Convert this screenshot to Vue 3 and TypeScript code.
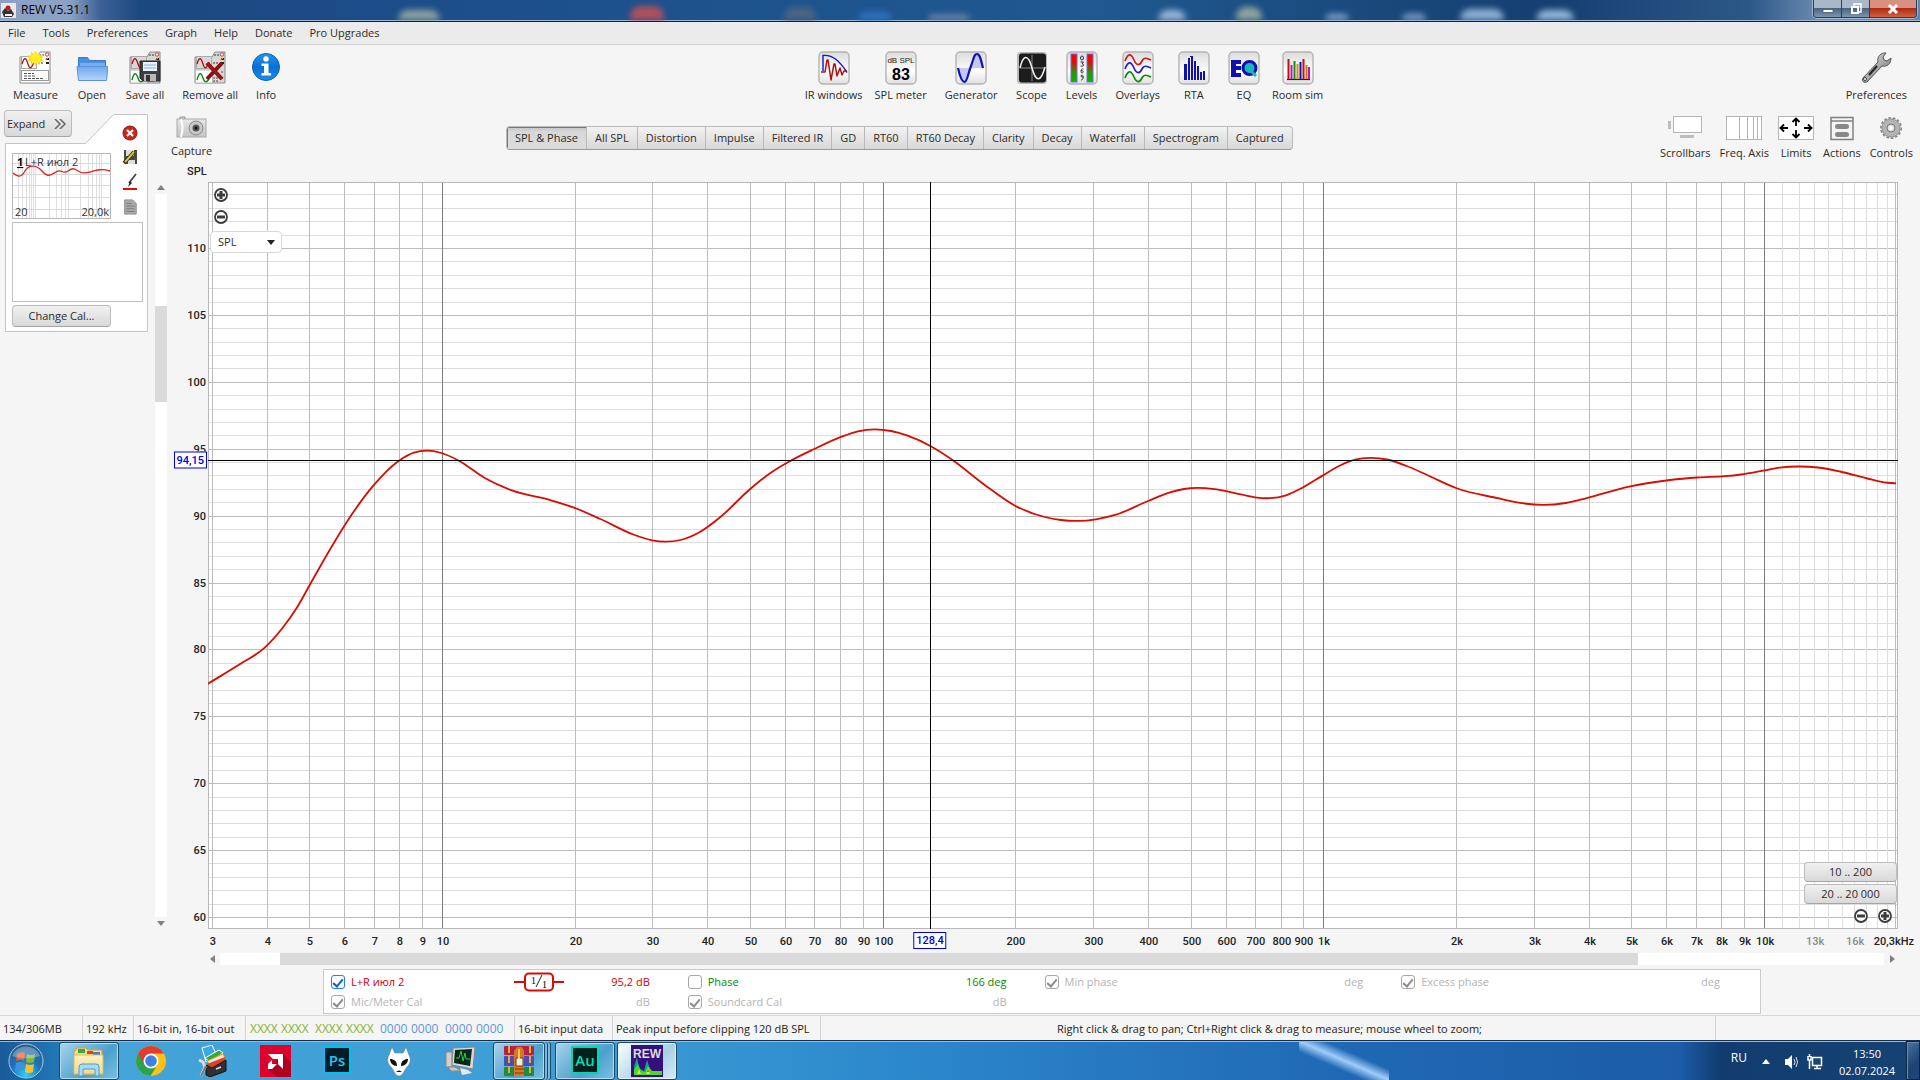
<script setup lang="ts">
import { ref } from 'vue'

interface Tool { label: string; icon: string; tight?: boolean }
interface GridLine { pos: number; kind: string }
interface AxisLabel { pos: number; text: string; dim?: boolean }
interface Trace { label: string; value: string; checked: boolean; disabled?: boolean; tone: string; smooth?: boolean }

const frame = '<rect x="1" y="1" width="30" height="32" rx="4" fill="url(#face)" stroke="#b4b4b4" stroke-width="1.4"/>'
const sheet = (bg: string) =>
  `<path d="M1 6h17l3-5h10v31H1z" fill="${bg}" stroke="#8a8a8a"/><rect x="2.500" y="5.500" width="15" height="12" fill="${bg}" stroke="#aaa"/><path d="M3 13c2-7 4-7 6 0s4 3 6-2" fill="none" stroke="#b01212" stroke-width="1.300"/><circle cx="28" cy="3.500" r="1.700" fill="#fff" stroke="#d33"/><path d="M27 8h3M27 12h3" stroke="#222" stroke-width="2"/><path d="M26 9l3-2" stroke="#e6b800"/><path d="M20 4h5M19 12h5" stroke="#333" stroke-dasharray="2 1"/>`
const wave2 = '<rect x="1.500" y="19" width="17" height="13" fill="#fff" stroke="#bbb"/><path d="M3 29c2-8 4-8 6-2s4 4 6 1" fill="none" stroke="#0a8a1a" stroke-width="1.400"/><path d="M19 27h6M19 30h5M27 21h3M27 27h3" stroke="#444" stroke-dasharray="2 1"/>'

const icons: Record<string, string> = {
  measure: sheet('#fff') + '<rect x="2.500" y="19.500" width="27" height="10" fill="#fff" stroke="#999"/><path d="M5 22.500h10M5 25h12M5 27.500h20" stroke="#555" stroke-dasharray="3 1"/><path d="M16.500 0l1.500 3 3-2v3.500l3.500 0-2 3 2 3h-3.500l0 3.500-3-2-1.500 3-1.500-3-3 2v-3.500h-3.500l2-3-2-3h3.500V1l3 2z" fill="#ffd900"/><circle cx="16.500" cy="7.500" r="5" fill="#ffee20"/>',
  open: '<path d="M2.500 8V6.500h9l2 3h16V16h-27z" fill="#4a90e0" stroke="#3579c8"/><path d="M4 12h25v6H4z" fill="#78aef0"/><path d="M1 15.500h31l-1.500 14h-28z" fill="url(#folder)" stroke="#5a94dc"/>',
  saveall: sheet('#d8d8d8') + wave2 + '<path d="M11 10h20v20H14l-3-3z" fill="#3e3e42" stroke="#222"/><rect x="14" y="11" width="14" height="9" fill="#e8f2fb"/><path d="M15 14h12M15 17h12" stroke="#8fb0cc"/><path d="M15 23h12v7H15z" fill="#b8b8b8"/><path d="M17 24h4v6h-4z" fill="#333"/>',
  removeall: sheet('#d8d8d8') + wave2 + '<path d="M13 12l15 16M28 12L13 28" stroke="#8c0f0f" stroke-width="4"/><path d="M13 12l15 16" stroke="#a81818" stroke-width="1.500"/>',
  info: '<circle cx="16" cy="16" r="13.500" fill="url(#blue)" stroke="#0c5fb4"/><circle cx="16" cy="8" r="2.700" fill="#fff"/><path d="M11.500 12.500h7V22h2.500v2.500H11.500V22H14v-7h-2.500z" fill="#fff"/>',
  ir: frame + '<path d="M5 20V4.500c10-1 17 6 24 17" fill="none" stroke="#1414c8" stroke-width="1.400"/><path d="M3 21h4L9 9h1l3 20 3-16h1l2 12 3-8 2 7 2-4h3" fill="none" stroke="#b01010" stroke-width="1.500" stroke-linejoin="round"/>',
  spl: frame + '<text x="16" y="12" text-anchor="middle" font-family="Liberation Sans" font-size="8" fill="#222">dB SPL</text><text x="16" y="29" text-anchor="middle" font-family="Liberation Sans" font-weight="700" font-size="16" fill="#000">83</text>',
  generator: frame + '<path d="M3 17h12c-3 12-5 15-7 14S4 23 3 17zM15 17h13c-2-9-4-14-6-14s-4 5-7 14z" fill="#c5c8ee"/><path d="M3 17c2 9 4 14 6.500 14S13 23 16 15 19 3 22 3s4 6 6 14" fill="none" stroke="#1010b8" stroke-width="2.200"/>',
  scope: '<rect x="1" y="1" width="30" height="32" rx="4" fill="#b8b8b8"/><rect x="3" y="2.500" width="27" height="29" rx="3" fill="#1c1c1c"/><path d="M16 4v26M4 17h25" stroke="#888"/><path d="M4 17c3-13 8-15 12 0s9 14 13-1" fill="none" stroke="#eee" stroke-width="1.600"/>',
  levels: frame + '<rect x="5" y="3" width="6" height="28" fill="url(#meter)" stroke="#7070e0"/><rect x="21" y="3" width="6" height="28" fill="url(#meter)" stroke="#7070e0"/><g fill="none" stroke="#333"><ellipse cx="16" cy="7" rx="1.500" ry="2"/><path d="M14.500 11h3l-1.500 2c3 0 2 3-1.500 2M17.500 18c-3-1-3 4-1.500 4s2-2.500-1-2.500M17.500 26c-3 1-3-2-1.500-2s2 5-1 5"/></g>',
  overlays: frame + '<g fill="none" stroke-width="1.700"><path d="M3 10c3-8 6-8 9-1s6 5 8 1 5-3 9-1" stroke="#cc1c1c"/><path d="M3 18c3-8 6-8 9-1s6 5 8 1 5-3 9-1" stroke="#2020d0"/><path d="M3 27c3-8 6-8 9-1s6 5 8 1 5-3 9-1" stroke="#128a12"/></g>',
  rta: frame + '<path d="M6 29V13h3V7h3V5h3v5h3v5h3v6h3v-1h3v9z" fill="#1010b0"/><path d="M9.500 7v22M12.500 6v23M15.500 8v21M18.500 12v17M21.500 17v12M24.500 20v9" stroke="#f0f0f0"/>',
  eq: frame + '<path d="M3 9h10v4H8v2h5v4H8v3h5v4H3z" fill="#1010b0"/><circle cx="21.500" cy="17" r="6.500" fill="#18b8b8" stroke="#1010b0" stroke-width="3"/><path d="M22 19l6 6" stroke="#18b8b8" stroke-width="3"/>',
  room: frame + '<path d="M5 28.500h23" stroke="#222" stroke-width="1.200"/><g stroke-width="2"><path d="M6.500 8v20" stroke="#c01010"/><path d="M9.500 14v14" stroke="#c010c0"/><path d="M12.500 10v18" stroke="#109010"/><path d="M15.500 13v15" stroke="#d09010"/><path d="M18.500 11v17" stroke="#1010c0"/><path d="M21.500 8v20" stroke="#c01010"/><path d="M24.500 14v14" stroke="#c08010"/><path d="M27 16v12" stroke="#c010c0"/></g>',
  wrench: '<path d="M3 27L18 11c-1-4 1-8 6-9l2 0-3 4 1 3 3 1 4-3c0 6-4 9-9 8L7 31c-3 1-6-1-4-4z" fill="url(#steel)" stroke="#555"/><circle cx="5" cy="28" r="1.500" fill="#fff" stroke="#444"/><path d="M9 24l8-9" stroke="#222" stroke-width="2"/>',
  camera: '<path d="M4 4V2h5v2" fill="#ccc" stroke="#999"/><rect x="1" y="4" width="29" height="18" fill="url(#steel2)" stroke="#aaa"/><path d="M5 4c2 6 2 12 0 18" fill="none" stroke="#fff" stroke-width="2"/><circle cx="20" cy="13" r="7" fill="#c8c8c8" stroke="#888"/><circle cx="20" cy="13" r="3.500" fill="#555"/><circle cx="20" cy="13" r="1.500" fill="#101020"/>',
  scrollbars: '<path d="M1 6h3v8H1zM13 20h14v3H13z" fill="#bdbdbd"/><rect x="6.500" y="1.500" width="28" height="16" fill="#fff" stroke="#b5b5b5"/>',
  freq: '<rect x=".5" y="1.500" width="35" height="23" fill="#fff" stroke="#b5b5b5"/><path d="M13.500 1v23M21.500 1v23M27.500 1v23M31.500 1v23" stroke="#b5b5b5"/>',
  limits: '<rect x=".5" y="1.500" width="35" height="23" fill="#fff" stroke="#b5b5b5"/><path d="M18 11V4M14.500 7L18 3.500 21.500 7M18 15v7M14.500 19l3.500 3.500 3.500-3.500M10 13H3M6 9.500L2.500 13 6 16.500M26 13h7M30 9.500l3.500 3.500-3.500 3.500" fill="none" stroke="#000" stroke-width="1.800"/>',
  actions: '<path d="M7 2.500h22v22H7zM7 6h22" fill="none" stroke="#808080" stroke-width="1.500"/><rect x="11" y="9" width="14" height="5" rx="2.500" fill="#888"/><rect x="11" y="17" width="14" height="5" rx="2.500" fill="#888"/>',
  gear: '<circle cx="18" cy="13" r="9.500" fill="none" stroke="#8a8a8a" stroke-width="3" stroke-dasharray="2.500 1.700"/><circle cx="18" cy="13" r="6.500" fill="none" stroke="#b4b4b4" stroke-width="6"/><circle cx="18" cy="13" r="9" fill="none" stroke="#999"/><circle cx="18" cy="13" r="4" fill="#ddd" stroke="#777"/><circle cx="18" cy="13" r="2" fill="#fff"/>',
}

const menus: string[] = ['File', 'Tools', 'Preferences', 'Graph', 'Help', 'Donate', 'Pro Upgrades']
const fileTools: Tool[] = [
  { label: 'Measure', icon: 'measure' }, { label: 'Open', icon: 'open' }, { label: 'Save all', icon: 'saveall' },
  { label: 'Remove all', icon: 'removeall', tight: true }, { label: 'Info', icon: 'info' },
]
const mainTools: Tool[] = [
  { label: 'IR windows', icon: 'ir', tight: true }, { label: 'SPL meter', icon: 'spl' }, { label: 'Generator', icon: 'generator' },
  { label: 'Scope', icon: 'scope' }, { label: 'Levels', icon: 'levels' }, { label: 'Overlays', icon: 'overlays' },
  { label: 'RTA', icon: 'rta' }, { label: 'EQ', icon: 'eq', tight: true }, { label: 'Room sim', icon: 'room' },
]
const graphTools: Tool[] = [
  { label: 'Scrollbars', icon: 'scrollbars' }, { label: 'Freq. Axis', icon: 'freq' }, { label: 'Limits', icon: 'limits' },
  { label: 'Actions', icon: 'actions' }, { label: 'Controls', icon: 'gear' },
]
const tabs: string[] = ['SPL & Phase', 'All SPL', 'Distortion', 'Impulse', 'Filtered IR', 'GD', 'RT60', 'RT60 Decay', 'Clarity', 'Decay', 'Waterfall', 'Spectrogram', 'Captured']
const activeTab = ref('SPL & Phase')

// Desktop shortcuts showing through the translucent title bar: left edge, width and height, colour
const glows: [number, number, number, string][] = [
  [398, 42, 10, '#8fa3a0'], [630, 34, 14, '#b0505c'], [784, 32, 13, '#4a6484'], [858, 34, 8, '#2c74c0'], [928, 42, 5, '#7890ac'],
  [1158, 28, 10, '#9cb8d8'], [1236, 26, 13, '#8fa49c'], [1325, 24, 6, '#88a8cc'], [1402, 24, 6, '#88a8cc'], [1460, 44, 11, '#8cb0d4'], [1536, 38, 10, '#94b8dc'],
]

const W = 1690
const H = 747
const fx = (f: number): number => Math.round(234 + 440.7 * (Math.log10(f) - 1))
const ly = (db: number): number => Math.round(66 + (110 - db) * 13.38)

const vLines: GridLine[] = []
const xTicks: [number, string][] = []
for (const base of [1, 10, 100, 1000]) {
  for (let m = 1; m <= 9; m++) {
    const f = base * m
    if (f < 3) continue
    vLines.push({ pos: fx(f), kind: m === 1 ? 'decade' : 'major' })
    xTicks.push([f, f >= 1000 ? `${m}k` : String(f)])
  }
}
vLines.push({ pos: fx(10000), kind: 'decade' })
for (let k = 11; k <= 20; k++) vLines.push({ pos: fx(k * 1000), kind: 'minor' })
vLines.push({ pos: 1687, kind: 'major' })
xTicks.push([10000, '10k'], [13000, '13k'], [16000, '16k'])

const hLines: GridLine[] = []
for (let db = 60; db <= 114; db++) hLines.push({ pos: ly(db), kind: db % 5 === 0 ? 'major' : 'minor' })
hLines.sort((a, b) => (a.kind === b.kind ? 0 : a.kind === 'minor' ? -1 : 1))

const yLabels: AxisLabel[] = [110, 105, 100, 95, 90, 85, 80, 75, 70, 65, 60].map(v => ({ pos: ((ly(v) + 1) / H) * 100, text: String(v) }))
const xLabels: AxisLabel[] = xTicks.map(([f, text]) => ({ pos: ((fx(f) + 1) / W) * 100, text, dim: f > 10000 }))
xLabels.push({ pos: (1686 / W) * 100, text: '20,3kHz' })
const cursor = { x: 722, y: 278 }

const points: [number, number][] = [
  [0, 501.700], [33.700, 481], [55.600, 466.700], [74.300, 446.300], [88.500, 426.300], [101.700, 403], [123.600, 364.700], [143.400, 333], [165.300, 303.700], [190.600, 279], [205.900, 270.700], [219, 268.700],
  [233.300, 271], [250.900, 278.700], [277.200, 296.300], [304.600, 308.700], [343, 318.300], [366, 325.700], [392.400, 337], [425.300, 352.500], [444, 358.300], [457, 359.600], [472.500, 358],
  [491, 350.500], [513, 334.500], [540.500, 308.500], [562.400, 291], [582.200, 279], [606.300, 267], [633.700, 254.700], [650, 249.300], [666.700, 247.300], [683, 249], [699.600, 253.700], [723.700, 264.700],
  [744.500, 278], [776.400, 302.700], [807, 323.700], [836.700, 335], [853, 338], [869.600, 338.900], [888, 337.300], [908, 332.700], [940, 319], [962.800, 310.200], [976, 307], [990, 305.900],
  [1006.700, 307.200], [1034, 312.700], [1047, 315.300], [1061.600, 316.200], [1078, 313.300], [1094.500, 305.700], [1114, 293.900], [1133, 283], [1147, 277.700], [1162.500, 275.900],
  [1179, 277.500], [1198.700, 284], [1220.600, 293.700], [1248, 306], [1289.800, 316.200], [1314, 321.200], [1334.700, 322.900], [1357.800, 321], [1379.700, 315.800], [1421, 304.700],
  [1462, 298], [1489.400, 295.500], [1516.800, 294.200], [1533, 292.500], [1555, 288.700], [1571.700, 285.700], [1590.300, 284.500], [1610, 285.500], [1632, 289.500], [1659.400, 296.500], [1676, 300.300], [1688, 301.300],
]
// Cubic Hermite through the samples, with tangents weighted for their uneven spacing
function smoothPath(p: [number, number][]): string {
  const secant = p.slice(1).map((q, i) => (q[1] - p[i][1]) / (q[0] - p[i][0]))
  const tangent = p.map((q, i) => {
    if (i === 0) return secant[0]
    if (i === p.length - 1) return secant[i - 1]
    const h0 = q[0] - p[i - 1][0], h1 = p[i + 1][0] - q[0]
    return (secant[i - 1] * h1 + secant[i] * h0) / (h0 + h1)
  })
  let d = `M${p[0][0]} ${p[0][1]}`
  for (let i = 0; i < p.length - 1; i++) {
    const h = (p[i + 1][0] - p[i][0]) / 3
    d += `C${p[i][0] + h} ${p[i][1] + tangent[i] * h} ${p[i + 1][0] - h} ${p[i + 1][1] - tangent[i + 1] * h} ${p[i + 1][0]} ${p[i + 1][1]}`
  }
  return d
}
const curve = smoothPath(points)

const traces: Trace[] = [
  { label: 'L+R июл 2', value: '95,2 dB', checked: true, tone: 'red', smooth: true },
  { label: 'Phase', value: '166 deg', checked: false, tone: 'green' },
  { label: 'Min phase', value: 'deg', checked: true, disabled: true, tone: 'off' },
  { label: 'Excess phase', value: 'deg', checked: true, disabled: true, tone: 'off' },
  { label: 'Mic/Meter Cal', value: 'dB', checked: true, disabled: true, tone: 'off' },
  { label: 'Soundcard Cal', value: 'dB', checked: true, disabled: true, tone: 'off' },
]

const tasks: { name: string; icon: string; state: string }[] = [
  { name: 'Explorer', state: 'open', icon: '<path d="M1 7l3-4h9l2 2h14v24H1z" fill="#f3dc8c" stroke="#c8a24a"/><path d="M5 4h7v4H5z" fill="#38a838"/><path d="M14 6h6v3h-6z" fill="#d84030"/><path d="M20 7h7v3h-7z" fill="#3a80d8"/><path d="M1 10h29v19H1z" fill="url(#manila)" stroke="#dcbb62"/><path d="M6 31v-9q0-3 3-3h14q3 0 3 3v9h-4v-7H10v7z" fill="#a8dcf4" stroke="#4c9ccc"/>' },
  { name: 'Chrome', state: '', icon: '<circle cx="16" cy="16" r="15" fill="#fbc116"/><path d="M16 16L3 8.500A15 15 0 0 0 15.500 31L22.500 19.500z" fill="#2ca24c"/><path d="M16 16V8.500h13A15 15 0 0 0 3 8.500l6.500 11z" fill="#e33b2e"/><circle cx="16" cy="16" r="7.500" fill="#fff"/><circle cx="16" cy="16" r="5.800" fill="#3f7fe8"/>' },
  { name: 'Tools', state: '', icon: '<path d="M5 3l10-3 5 11-11 6z" fill="#3aa8e8" stroke="#fff"/><path d="M8 13l14-8 4 3-13 9z" fill="#38a838" stroke="#fff"/><path d="M10 16l16-7 2 4-15 7z" fill="#f0e8d8" stroke="#d8a030"/><path d="M10 19l18-7v5l-15 6z" fill="#e04028"/><path d="M9 20l6 3 14-8v11l-16 6-4-2z" fill="#303030" stroke="#111"/><path d="M19 24l5-2" stroke="#ddd" stroke-width="1.500"/><path d="M2 15l4 2 2 5-4 9" fill="none" stroke="#ddd" stroke-width="3"/><path d="M4 31l5-10" stroke="#777" stroke-width="2"/>' },
  { name: 'AMD', state: '', icon: '<path d="M1 0h31v32H1z" fill="#e0002c"/><path d="M24 9l8 8v15H18l-9-8z" fill="#b00022"/><path d="M9 9h15v15l-5-5v-5h-5zM13 15v4h5l-5 5H9v-5z" fill="#fff"/>' },
  { name: 'Photoshop', state: '', icon: '<rect x="3" y="2" width="26" height="26" fill="#001d26" stroke="#00c0f0" stroke-width="2"/><text x="16" y="21" text-anchor="middle" font-family="Open Sans" font-weight="600" font-size="15" fill="#20c8f8">Ps</text>' },
  { name: 'foobar2000', state: '', icon: '<path d="M16 31c-4 0-5-6-8-9-4-4-4-8-2-12L9 2c1 2 2 5 3 6h8c1-1 2-4 3-6l3 8c2 4 2 8-2 12-3 3-4 9-8 9z" fill="#fff" stroke="#777" stroke-width=".6"/><path d="M7 14c4 0 7 2 7 7-4 0-7-3-7-7zM25 14c-4 0-7 2-7 7 4 0 7-3 7-7zM13 27q3-3 6 0z" fill="#101010"/>' },
  { name: 'Monitor', state: '', icon: '<path d="M1 7h6v15H1z" fill="#d0d0d0" stroke="#888"/><path d="M8 3l22-1-2 22-21-4z" fill="#d8d8d8" stroke="#888"/><path d="M10 5l17-1-2 17-16-3z" fill="#062818"/><path d="M11 13h3l2-7 2 10 2-8 1 6h4" fill="none" stroke="#28d048"/><path d="M3 22h7l6 4H6z" fill="#c8c8c8" stroke="#888"/><path d="M15 23l8 2 4 3-10 2z" fill="#e8e8e8"/>' },
  { name: 'WinRAR', state: 'open stacked', icon: '<rect x="1" y="1" width="30" height="9" rx="1" fill="#b82040"/><rect x="1" y="11" width="30" height="10" rx="1" fill="#4c4cb8"/><rect x="1" y="22" width="30" height="9" rx="1" fill="#208a40"/><path d="M6 1v30M27 1v30" stroke="#d8b040" stroke-width="2" stroke-dasharray="7 3"/><path d="M11 31V6l3-4h5l2 4v25z" fill="#d87820"/><path d="M13 13h7v8h-7z" fill="#f0ead8" stroke="#604020"/><path d="M16 4v10" stroke="#f8d060" stroke-width="2"/><path d="M12 24h9M12 28h9" stroke="#803008"/>' },
  { name: 'Audition', state: 'open', icon: '<rect x="3" y="2" width="26" height="26" fill="#00201c" stroke="#00d8b0" stroke-width="2"/><text x="16" y="21" text-anchor="middle" font-family="Open Sans" font-weight="600" font-size="15" fill="#08dcb8">Au</text>' },
  { name: 'REW', state: 'active', icon: '<path d="M0 0h32v32H0z" fill="#35107c"/><path d="M3 30V22l3-10 2 11 5 3 3-11 3 9 2 3 10-1v4z" fill="#10a0a0"/><path d="M3 30v-5l4-6 3 7 4 1 3-6 4 5 10 0v4z" fill="#48d830"/><path d="M6 29l2-5 2 5zM15 29l2-6 2 6z" fill="#f0e020"/><path d="M16 27l1-3 1 3z" fill="#f03010"/><text x="16" y="13" text-anchor="middle" font-family="Liberation Sans" font-weight="700" font-size="12" fill="#ddd">REW</text>' },
]
</script>

<template>
  <div class="app">
    <svg class="defs" width="0" height="0" aria-hidden="true">
      <defs>
        <linearGradient id="face" x2="0" y2="1"><stop offset="0" stop-color="#dcdcdc" /><stop offset=".6" stop-color="#fdfdfd" /><stop offset="1" stop-color="#e0e0e0" /></linearGradient>
        <linearGradient id="folder" x2="0" y2="1"><stop offset="0" stop-color="#6ea6ec" /><stop offset="1" stop-color="#b4d6fb" /></linearGradient>
        <linearGradient id="blue" x2="0" y2="1"><stop offset="0" stop-color="#2a92ee" /><stop offset=".5" stop-color="#0870d4" /><stop offset="1" stop-color="#1c8cf0" /></linearGradient>
        <linearGradient id="meter" x2="0" y2="1"><stop offset="0" stop-color="#f00" /><stop offset=".3" stop-color="#e01000" /><stop offset=".7" stop-color="#20a000" /><stop offset="1" stop-color="#00b800" /></linearGradient>
        <linearGradient id="steel" x2="1" y2="1"><stop offset="0" stop-color="#eee" /><stop offset="1" stop-color="#666" /></linearGradient>
        <linearGradient id="steel2" x2="0" y2="1"><stop offset="0" stop-color="#e8e8e8" /><stop offset="1" stop-color="#c4c4c4" /></linearGradient>
        <linearGradient id="manila" x2="0" y2="1"><stop offset="0" stop-color="#fdf2c0" /><stop offset="1" stop-color="#f0d890" /></linearGradient>
        <radialGradient id="orb" cy=".9" r=".9"><stop offset="0" stop-color="#30d0ff" /><stop offset=".5" stop-color="#1c72b8" /><stop offset="1" stop-color="#2c5c8c" /></radialGradient>
      </defs>
    </svg>

    <header class="titlebar">
      <div class="glass" aria-hidden="true"><i v-for="g in glows" :key="g[0]" :style="{ left: (g[0] / 1920) * 100 + '%', width: g[1] + 'px', height: g[2] + 'px', background: g[3] }" /></div>
      <svg class="app-icon" viewBox="0 0 16 16" width="16" height="16">
        <path d="M1 0h15v15H1z" fill="#e8e8ea" /><path d="M2 9l3-4 3 3 3-2 3 5-2 3H4z" fill="#333" /><circle cx="8" cy="5" r="2.500" fill="#c01818" /><path d="M5 12h7" stroke="#fff" stroke-width="2" />
      </svg>
      <h1>REW V5.31.1</h1>
      <div class="win-buttons">
        <button type="button" aria-label="Minimize"><svg width="12" height="12" viewBox="0 0 12 12"><path d="M1 6.500h10v3H1z" fill="#fff" stroke="#46566a" stroke-width=".8" /></svg></button>
        <button type="button" aria-label="Restore"><svg width="12" height="12" viewBox="0 0 12 12"><path d="M4 3V1h7v8H9" fill="none" stroke="#fff" stroke-width="1.500" /><rect x="2" y="4" width="6" height="6" fill="none" stroke="#fff" stroke-width="2" /></svg></button>
        <button type="button" class="close" aria-label="Close"><svg width="12" height="12" viewBox="0 0 12 12"><path d="M2 2l8 8M10 2l-8 8" stroke="#fff" stroke-width="3" /></svg></button>
      </div>
    </header>

    <nav class="menubar"><button v-for="m in menus" :key="m" type="button">{{ m }}</button></nav>

    <div class="toolbar">
      <div class="tool-group">
        <button v-for="t in fileTools" :key="t.label" type="button" class="tool" :class="{ tight: t.tight }"><svg class="ico" viewBox="0 0 32 34" v-html="icons[t.icon]" />{{ t.label }}</button>
      </div>
      <div class="tool-group">
        <button v-for="t in mainTools" :key="t.label" type="button" class="tool" :class="{ tight: t.tight }"><svg class="ico" viewBox="0 0 32 34" v-html="icons[t.icon]" />{{ t.label }}</button>
      </div>
      <div class="tool-group">
        <button type="button" class="tool"><svg class="ico" viewBox="0 0 32 34" v-html="icons.wrench" />Preferences</button>
      </div>
    </div>

    <main class="workspace">
      <aside class="sidebar">
        <section class="measurement">
          <svg class="outline" viewBox="0 0 143 218" width="143" height="218"><path d="M.5 29.500h80l28-29h34v217H.5z" fill="#fff" stroke="#c4c4c4" /></svg>
          <div class="card-top">
            <div class="card-left">
              <button type="button" class="btn expand">Expand <svg width="12" height="10" viewBox="0 0 12 10"><path d="M1 0l5 5-5 5M6 0l5 5-5 5" fill="none" stroke="#666" stroke-width="1.500" /></svg></button>
              <svg class="thumb" viewBox="0 0 99 66" width="99" height="66">
                <rect x=".5" y=".5" width="98" height="65" fill="#fff" stroke="#b8b8b8" />
                <path d="M6.500 1v64M10.500 1v64M14.500 1v64M17.500 1v64M19.500 1v64M21.500 1v64M23.500 1v64M37.500 1v64M44.500 1v64M49.500 1v64M53.500 1v64M56.500 1v64M68.500 1v64M76.500 1v64M80.500 1v64M84.500 1v64M87.500 1v64M89.500 1v64" stroke="#dedede" />
                <path d="M1 10.500h97M1 21.500h97M1 32.500h97M1 44.500h97M1 56.500h97" stroke="#dadada" />
                <path d="M1 20C6 24 9 25 13 18S25 12 30 18 38 23 44 19 50 22 56 18 62 16 68 19 78 18 86 17 94 17 98 18" fill="none" stroke="#e02020" stroke-width="1.300" />
                <text x="5" y="13" class="mini idx">1</text><text x="13" y="13" class="mini">L+R июл 2</text>
                <text x="3" y="63" class="mini">20</text><text x="97" y="63" text-anchor="end" class="mini">20,0k</text>
              </svg>
            </div>
            <div class="card-icons">
              <svg viewBox="0 0 16 16" width="16" height="16"><circle cx="8" cy="8" r="7" fill="#cc2418" stroke="#8c1408" /><path d="M5 5l6 6M11 5l-6 6" stroke="#fff" stroke-width="2.200" /></svg>
              <svg viewBox="0 0 16 16" width="16" height="16"><path d="M2 1h13v14H4l-2-2z" fill="#4a4a4a" /><path d="M4 1h8v6H4zM6 11h7v4H6z" fill="#ddd" /><path d="M2 14L12 3" stroke="#222" stroke-width="3.500" /><path d="M3 13L12 3" stroke="#e8c020" stroke-width="2" /></svg>
              <svg viewBox="0 0 16 18" width="16" height="18"><path d="M14 1L7 10" stroke="#444" stroke-width="1.800" /><path d="M8 8l-2 6 4-4z" fill="#222" /><path d="M1 15h14v2H1z" fill="#e01000" /></svg>
              <svg viewBox="0 0 16 18" width="16" height="16"><path d="M2 1h9l4 4v12H2z" fill="#aaa" stroke="#8a8a8a" /><path d="M4 5h6M4 8h9M4 11h9M4 14h9" stroke="#777" /></svg>
            </div>
          </div>
          <textarea class="notes" aria-label="Measurement notes" />
          <button type="button" class="btn cal">Change Cal...</button>
        </section>
        <div class="vscroll"><span class="arrow up" /><div class="track"><div class="handle" /></div><span class="arrow down" /></div>
      </aside>

      <section class="graph">
        <div class="graph-head">
          <button type="button" class="tool capture"><svg width="32" height="24" viewBox="0 0 32 24" v-html="icons.camera" />Capture</button>
          <span class="gap-a" />
          <div class="tabs" role="tablist">
            <button v-for="t in tabs" :key="t" type="button" role="tab" :aria-selected="t === activeTab" :class="{ on: t === activeTab }" @click="activeTab = t">{{ t }}</button>
          </div>
          <span class="gap-b" />
          <div class="graph-tools">
            <button v-for="t in graphTools" :key="t.label" type="button" class="tool"><svg width="36" height="26" viewBox="0 0 36 26" v-html="icons[t.icon]" />{{ t.label }}</button>
          </div>
        </div>
        <div class="axis-name axis">SPL</div>
        <div class="plot-row">
          <div class="y-axis axis">
            <span v-for="l in yLabels" :key="l.text" :style="{ top: l.pos + '%' }">{{ l.text }}</span>
            <output class="cursor-y" :style="{ top: (cursor.y / H) * 100 + '%' }">94,15</output>
          </div>
          <div class="plot">
            <svg class="canvas" :viewBox="`0 0 ${W} ${H}`">
              <rect :width="W" :height="H" fill="#fff" />
              <g shape-rendering="crispEdges">
                <rect v-for="(l, i) in hLines" :key="'h' + i" x="0" :y="l.pos" :width="W" height="1" :class="l.kind" />
                <rect v-for="(l, i) in vLines" :key="'v' + i" :x="l.pos" y="0" width="1" :height="H" :class="l.kind" />
                <path d="M0 0h1690v747H0zM1 1v745h1688V1z" fill="#b8b8b8" fill-rule="evenodd" />
              </g>
              <path :d="curve" fill="none" stroke="#d80c00" stroke-width="1.800" />
              <g shape-rendering="crispEdges">
                <rect x="0" :y="cursor.y" :width="W" height="1" /><rect :x="cursor.x" y="0" width="1" :height="H" />
              </g>
            </svg>
            <div class="over-left">
              <button type="button" class="zoom" aria-label="Zoom in"><svg width="16" height="16" viewBox="0 0 16 16"><circle cx="8" cy="8" r="6" fill="#fff" stroke="#3c3c3c" stroke-width="1.800" /><path d="M4 8h8M8 4v8" stroke="#3c3c3c" stroke-width="3" /></svg></button>
              <button type="button" class="zoom" aria-label="Zoom out"><svg width="16" height="16" viewBox="0 0 16 16"><circle cx="8" cy="8" r="6" fill="#fff" stroke="#3c3c3c" stroke-width="1.800" /><path d="M4 8h8" stroke="#3c3c3c" stroke-width="3" /></svg></button>
              <div class="select"><select aria-label="Left axis"><option>SPL</option></select></div>
            </div>
            <div class="over-right">
              <button type="button" class="btn">10 .. 200</button>
              <button type="button" class="btn">20 .. 20 000</button>
              <div class="zoom-pair">
                <button type="button" class="zoom" aria-label="Narrow"><svg width="16" height="16" viewBox="0 0 16 16"><circle cx="8" cy="8" r="6" fill="#fff" stroke="#3c3c3c" stroke-width="1.800" /><path d="M4 8h8" stroke="#3c3c3c" stroke-width="3" /></svg></button>
                <button type="button" class="zoom" aria-label="Widen"><svg width="16" height="16" viewBox="0 0 16 16"><circle cx="8" cy="8" r="6" fill="#fff" stroke="#3c3c3c" stroke-width="1.800" /><path d="M4 8h8M8 4v8" stroke="#3c3c3c" stroke-width="3" /></svg></button>
              </div>
            </div>
          </div>
        </div>
        <div class="x-axis axis">
          <span v-for="l in xLabels" :key="l.text" :class="{ dim: l.dim }" :style="{ left: l.pos + '%' }">{{ l.text }}</span>
          <output class="cursor-x" :style="{ left: (cursor.x / W) * 100 + '%' }">128,4</output>
        </div>
        <div class="hscroll"><span class="arrow left" /><div class="track"><div class="handle" /></div><span class="arrow right" /></div>
        <div class="legend">
          <div v-for="t in traces" :key="t.label" class="trace" :class="t.tone">
            <label><input type="checkbox" :checked="t.checked" :disabled="t.disabled" />{{ t.label }}</label>
            <svg v-if="t.smooth" class="smooth" width="50" height="20" viewBox="0 0 50 20"><path d="M0 10h50" stroke="#d80c00" stroke-width="2" /><rect x="11" y="1.500" width="28" height="17" rx="4" fill="#fff" stroke="#d80c00" stroke-width="2" /><text x="17" y="12" class="frac">1</text><path d="M22 15l6-12" stroke="#222" /><text x="28" y="16" class="frac">1</text></svg>
            <span class="value">{{ t.value }}</span>
          </div>
        </div>
      </section>
    </main>

    <footer class="status">
      <span>134/306MB</span><span>192 kHz</span><span>16-bit in, 16-bit out</span>
      <span class="bits"><b>XXXX</b><b>XXXX</b><i /><b>XXXX</b><b>XXXX</b><i /><em>0000</em><em>0000</em><i /><em>0000</em><em>0000</em></span>
      <span>16-bit input data</span><span>Peak input before clipping 120 dB SPL</span>
      <span class="hint">Right click &amp; drag to pan; Ctrl+Right click &amp; drag to measure; mouse wheel to zoom;</span><span />
    </footer>

    <div class="taskbar">
      <button type="button" class="start" aria-label="Start">
        <svg width="38" height="38" viewBox="0 0 38 38"><circle cx="19" cy="19" r="17" fill="url(#orb)" stroke="#a8c8e4" /><path d="M10 12q4-3 8-1l-1 8q-4-2-8 0z" fill="#e8602c" /><path d="M20 12q4 2 8 0l-1 8q-4 2-8 0z" fill="#80b83c" /><path d="M9 21q4-2 8 0l-1 8q-4-2-8 0z" fill="#3c94e0" /><path d="M19 22q4 2 8 0l-1 8q-4 2-8 0z" fill="#f8c030" /><path d="M5 14a15 15 0 0 1 28 0q-14 5-28 0z" fill="#fff" opacity=".3" /></svg>
      </button>
      <button v-for="t in tasks" :key="t.name" type="button" class="task" :class="t.state" :aria-label="t.name"><svg width="32" height="32" viewBox="0 0 32 32" v-html="t.icon" /></button>
      <div class="tray">
        <span class="lang">RU</span>
        <svg class="more" width="10" height="6" viewBox="0 0 10 6"><path d="M5 0l4 5H1z" fill="#fff" /></svg>
        <svg width="16" height="16" viewBox="0 0 16 16"><path d="M2 5h3l4-4v14l-4-4H2z" fill="#fff" /><path d="M11 5q2 3 0 6M13 3q3 5 0 10" fill="none" stroke="#ddd" /></svg>
        <svg width="16" height="16" viewBox="0 0 16 16"><rect x="5.500" y="3.500" width="9" height="8" fill="#1a4474" stroke="#fff" stroke-width="1.500" /><path d="M7 14.500h7M10 12v2M2.500 6v9M1 2v4h3V2M2.500 0v3" fill="none" stroke="#fff" stroke-width="1.500" /></svg>
        <div class="clock"><span>13:50</span><span>02.07.2024</span></div>
      </div>
      <button type="button" class="desktop" aria-label="Show desktop" />
    </div>
  </div>
</template>

<style>
body { margin: 0; background: #f5f5f5; }
</style>

<style scoped>
.app { min-height: 100vh; display: flex; flex-direction: column; background: #f5f5f5; color: #2b2b2b; font-family: "Open Sans", "Noto Sans", sans-serif; font-size: 11px; line-height: 16px; }
.app * { box-sizing: border-box; }
.defs { position: absolute; }
button { font: inherit; color: inherit; background: none; border: 0; padding: 0; margin: 0; white-space: nowrap; }
.titlebar { position: relative; display: flex; align-items: flex-start; height: 22px; padding-right: 3px; overflow: hidden; border-bottom: 1px solid #10203c; box-shadow: inset 0 -1px #9db6d4; background: linear-gradient(90deg, #8ca2c4 0, #8ca2c4 70px, #3c6298 100px, #1c4880 140px, #1c4f8c 480px, #20588f 1100px, #153f70 1550px, #2c5888 1750px, #6c8cb0 1820px, #6484ac 100%); }
.app-icon { position: relative; margin-top: 3px; }
h1 { position: relative; flex: 1; margin: 2px 0 0 5px; font-size: 12px; line-height: 16px; font-weight: 400; color: #000; }
.glass { position: absolute; inset: 0 0 1px; filter: blur(3px); }
.glass i { position: absolute; bottom: 0; border-radius: 10px 10px 0 0; }
.win-buttons { position: relative; display: flex; height: 18px; border: 1px solid #2a3c58; border-top: 0; border-radius: 0 0 4px 4px; overflow: hidden; box-shadow: 0 0 0 1px #a4b8d0; }
.win-buttons button { width: 28px; display: grid; place-items: center; background: linear-gradient(#a9b8c8 45%, #4c6480 50%, #7c94ac); border-right: 1px solid #2a3c58; }
.win-buttons .close { width: 46px; border: 0; background: linear-gradient(#d89080 45%, #b02c18 50%, #d06040); }
.menubar { display: flex; gap: 17px; height: 23px; padding-left: 8px; background: #ebebeb; border-bottom: 1px solid #d2d2d2; }
.toolbar { display: flex; justify-content: space-between; height: 60px; padding: 6px 13px 0; }
.tool-group { display: flex; gap: 18px; align-items: flex-start; }
.tool { display: flex; flex-direction: column; align-items: center; gap: 2px; }
.tool.tight { margin-right: -6px; }
.ico { width: 32px; height: 34px; }
.workspace { display: flex; flex: 1; }
.sidebar { width: 170px; flex: none; display: flex; }
.measurement { position: relative; width: 143px; height: 218px; margin: 9px 7px 0 5px; padding: 0 5px 0 7px; display: flex; flex-direction: column; align-items: flex-start; }
.outline { position: absolute; left: 0; top: 0; }
.card-top, .notes, .cal { position: relative; }
.card-top { display: flex; justify-content: space-between; width: 100%; height: 108px; padding-right: 5px; }
.card-left { display: flex; flex-direction: column; gap: 16px; margin-top: -4px; }
.card-icons { display: flex; flex-direction: column; gap: 8px; padding-top: 11px; }
.btn { height: 22px; border: 1px solid #bcbcbc; border-bottom-color: #a4a4a4; border-radius: 4px; background: linear-gradient(#f0f0f0, #d9d9d9); }
.expand { width: 68px; height: 27px; margin-left: -8px; display: flex; align-items: center; justify-content: space-between; padding: 0 5px 0 2px; }
.cal { width: 99px; margin-top: 3px; }
.notes { width: 131px; height: 80px; resize: none; border: 1px solid #c0c0c0; background: #fff; display: block; }
.mini { font-size: 11px; fill: #333; }
.idx { font-weight: 700; text-decoration: underline; fill: #000; }
.vscroll { width: 12px; display: flex; flex-direction: column; align-items: center; padding: 80px 0 88px; }
.vscroll .track { flex: 1; width: 12px; margin: 4px 0; background: #fff; }
.vscroll .handle { height: 96px; margin-top: 112px; background: #dadada; }
.arrow { width: 8px; height: 5px; background: #808080; flex: none; }
.up { clip-path: polygon(50% 0, 100% 100%, 0 100%); }
.down { clip-path: polygon(0 0, 100% 0, 50% 100%); }
.left, .right { width: 5px; height: 8px; }
.left { clip-path: polygon(100% 0, 100% 100%, 0 50%); }
.right { clip-path: polygon(0 0, 100% 50%, 0 100%); }
.graph { flex: 1; min-width: 0; display: flex; flex-direction: column; }
.graph-head { display: flex; height: 59px; padding: 10px 7px 0 1px; align-items: flex-start; }
.capture { gap: 4px; }
.gap-a { flex: 4; }
.gap-b { flex: 5; }
.tabs { display: flex; height: 24px; margin-top: 11px; border: 1px solid #bcbcbc; border-bottom: 1px solid #999; border-radius: 4px; overflow: hidden; background: linear-gradient(#f2f2f2, #d8d8d8); }
.tabs button { padding: 0 8px; border-right: 1px solid #b8b8b8; }
.tabs button:last-child { border: 0; }
.tabs .on { background: linear-gradient(#c4c4c4, #d8d8d8 5px, #dcdcdc); box-shadow: inset 1px 1px #777; }
.graph-tools { display: flex; gap: 9px; }
.graph-tools .tool { gap: 4px; }
.axis { font-family: "Liberation Sans Narrow", "Roboto", sans-serif; font-size: 11px; font-weight: 500; line-height: 16px; color: #222; }
.axis-name { height: 18px; padding-left: 17px; }
.plot-row { display: flex; padding-right: 22px; }
.y-axis { position: relative; width: 38px; flex: none; }
.y-axis span { position: absolute; right: 2px; transform: translateY(-50%); }
.axis output { position: absolute; height: 17px; padding: 0 2px; border: 1px solid #0000e0; background: #fff; color: #0000e0; line-height: 15px; }
.axis .cursor-y { right: 1px; transform: translateY(-50%); }
.plot { position: relative; flex: 1; min-width: 0; }
.canvas { display: block; width: 100%; height: auto; }
.minor { fill: #dedede; }
.major { fill: #bcbcbc; }
.decade { fill: #7c7c7c; }
.over-left { position: absolute; left: 2px; top: 5px; display: flex; flex-direction: column; gap: 6px; align-items: flex-start; }
.zoom { width: 16px; height: 16px; display: block; }
.zoom svg { display: block; }
.over-left .zoom { margin-left: 3px; }
.select { position: relative; width: 72px; }
.select::after { content: ""; position: absolute; right: 7px; top: 9px; width: 8px; height: 5px; background: #222; clip-path: polygon(0 0, 100% 0, 50% 100%); }
select { appearance: none; width: 100%; height: 22px; padding: 0 7px; border: 1px solid #d8d8d8; border-radius: 4px; background: #fff; font: inherit; color: inherit; display: block; }
.over-right { position: absolute; right: 1px; bottom: 5px; width: 93px; display: flex; flex-direction: column; gap: 2px; }
.over-right .btn { height: 20px; }
.zoom-pair { display: flex; justify-content: flex-end; gap: 8px; padding: 2px 4px 0 0; }
.x-axis { position: relative; height: 24px; margin: 0 22px 0 38px; }
.x-axis span { position: absolute; top: 5px; transform: translateX(-50%); }
.x-axis .dim { color: #8c8c8c; }
.axis .cursor-x { top: 3px; transform: translateX(-50%); }
.hscroll { display: flex; align-items: center; height: 12px; margin: 0 25px 0 40px; }
.hscroll .track { flex: 1; height: 12px; margin: 0 6px 0 5px; background: #fff; }
.hscroll .handle { height: 12px; margin: 0 246px 0 60px; background: #dadada; }
.legend { display: grid; grid-template-columns: repeat(4, 1fr); column-gap: 38px; align-content: center; height: 45px; margin: 4px 159px 0 153px; padding: 0 40px 0 7px; border: 1px solid #cacaca; background: #fff; }
.trace { display: flex; align-items: center; height: 20px; color: #b4b4b4; }
.trace label { display: flex; align-items: center; gap: 6px; flex: 1; }
.red { color: #d00000; }
.green { color: #008a00; }
.value { width: 86px; text-align: right; }
.frac { font: 10px "Liberation Serif", serif; fill: #000; }
.trace input { appearance: none; width: 14px; height: 14px; margin: 0; border: 1px solid #a8a8a8; border-radius: 3px; background: #fff; display: grid; place-items: center; }
.trace input:checked::after { content: ""; width: 4px; height: 8px; border: solid #8c8c8c; border-width: 0 2px 2px 0; transform: rotate(40deg); }
.red input { border-color: #2080f0; }
.red input:checked::after { border-color: #1060d8; }
.status { display: grid; grid-template-columns: 83px 51px 112px 269px 98px 208px 1fr 204px; height: 25px; margin-top: 1px; border-top: 1px solid #d8d8d8; line-height: 26px; white-space: nowrap; color: #222; }
.status > span { padding-left: 3px; border-right: 1px solid #d4d4d4; }
.status > span:last-child { border: 0; }
.status .hint { text-align: center; }
.status .bits { display: flex; gap: 3px; padding-left: 4px; font-size: 12px; }
.bits b, .bits em { font-style: normal; font-weight: 400; color: #86b428; width: 28px; }
.bits em { color: #6094e4; }
.taskbar { display: flex; height: 40px; border-top: 1px solid #14304e; box-shadow: inset 0 1px #8cc0e4; background: linear-gradient(to top right, transparent 36%, #a0ccf8 50%, transparent 64%) 71% 0 / 90px 100% no-repeat, linear-gradient(90deg, #1a5a98 0, #2278b8 60px, #44a4d8 120px, #3c9cd4 600px, #2c88cc 900px, #2068b4 1350px, #1c5ca8 1680px, #123c70 1720px, #164274 100%); }
.start { width: 58px; display: grid; place-items: center start; padding-left: 7px; }
.task { width: 60px; margin: 1px; height: 38px; display: grid; place-items: center; border: 1px solid transparent; border-radius: 3px; }
.task.open { border-color: #1c4870; background: linear-gradient(135deg, #a8d4ee, #4ca0cc 60%, #7cc0e4); box-shadow: inset 0 0 0 1px #b4dcf0; }
.task.active { border-color: #1c4870; background: linear-gradient(135deg, #fff, #a8d0e8 60%, #d4ecf8); box-shadow: inset 0 0 0 1px #e4f4fc; }
.task.stacked { width: 52px; margin-right: 9px; box-shadow: inset 0 0 0 1px #b4dcf0, 2px 0 #7cb8dc, 3px 0 #1c4870, 5px 0 #7cb8dc, 6px 0 #1c4870; }
.task svg { display: block; }
.tray { flex: 1; display: flex; align-items: center; justify-content: flex-end; color: #fff; gap: 8px; padding-top: 2px; }
.lang { margin: -8px 6px 0 0; font-size: 12px; }
.more { margin-right: 4px; }
.clock { display: flex; flex-direction: column; width: 72px; text-align: center; line-height: 17px; margin-right: 3px; }
.desktop { width: 14px; border: 1px solid #0c2440; background: linear-gradient(135deg, #4c74a0, #1c4474 60%); box-shadow: inset 1px 1px #6c8cb0; }
</style>
